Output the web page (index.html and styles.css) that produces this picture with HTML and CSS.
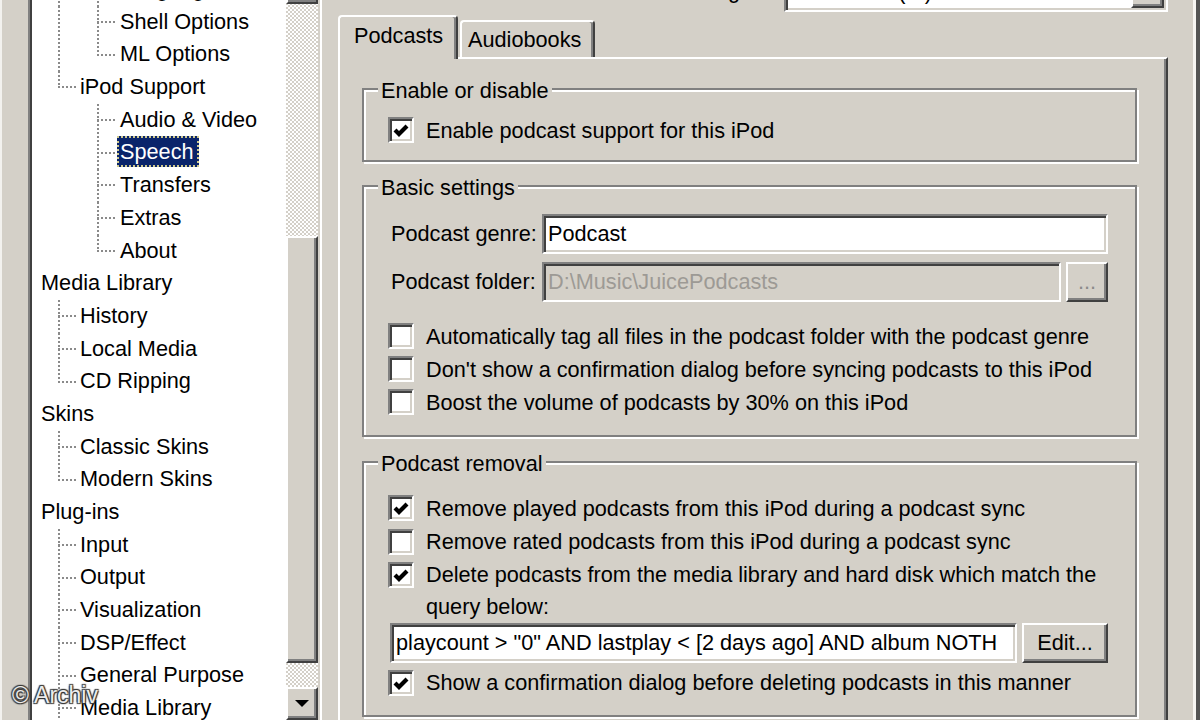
FILE: index.html
```html
<!DOCTYPE html>
<html>
<head>
<meta charset="UTF-8">
<title>Preferences - iPod Support</title>
<link rel="stylesheet" href="styles.css">
</head>
<body>
<div class="prefs">
	<!-- left: preferences tree -->
	<div class="tree-box">
		<div class="tree-inner">
			<ul class="tree">
				<li class="l2 mid through">Language</li>
				<li class="l2 mid through">Shell Options</li>
				<li class="l2 last through">ML Options</li>
				<li class="l1 last">iPod Support</li>
				<li class="l2 mid">Audio &amp; Video</li>
				<li class="l2 mid"><span class="sel">Speech</span></li>
				<li class="l2 mid">Transfers</li>
				<li class="l2 mid">Extras</li>
				<li class="l2 last">About</li>
				<li class="l0">Media Library</li>
				<li class="l1 mid">History</li>
				<li class="l1 mid">Local Media</li>
				<li class="l1 last">CD Ripping</li>
				<li class="l0">Skins</li>
				<li class="l1 mid">Classic Skins</li>
				<li class="l1 last">Modern Skins</li>
				<li class="l0">Plug-ins</li>
				<li class="l1 mid">Input</li>
				<li class="l1 mid">Output</li>
				<li class="l1 mid">Visualization</li>
				<li class="l1 mid">DSP/Effect</li>
				<li class="l1 mid">General Purpose</li>
				<li class="l1 mid">Media Library</li>
			</ul>
			<div class="scrollbar">
				<div class="sb-btn"><span class="arrow-up"></span></div>
				<div class="sb-track-top"></div>
				<div class="sb-thumb"></div>
				<div class="sb-track-bottom"></div>
				<div class="sb-btn"><span class="arrow-down"></span></div>
			</div>
		</div>
	</div>

	<!-- right: settings page -->
	<div class="page">
		<div class="device-bar">
			<span class="device-label">Current iPod setting:</span>
			<div class="combo">
				<span class="combo-text">iPod Nano (F:)</span>
				<span class="combo-btn"><span class="arrow-down"></span></span>
			</div>
		</div>

		<div class="tabs">
			<div class="tab active">Podcasts</div>
			<div class="tab">Audiobooks</div>
		</div>

		<div class="tab-page">
			<div class="group g-enable">
				<div class="legend">Enable or disable</div>
				<label class="check"><span class="box on"><svg viewBox="0 0 22 22"><path d="M5 11 L9 15 L17 7"/></svg></span>Enable podcast support for this iPod</label>
			</div>

			<div class="group g-basic">
				<div class="legend">Basic settings</div>
				<div class="form-row genre">
					<span class="form-label">Podcast genre:</span>
					<div class="field">Podcast</div>
				</div>
				<div class="form-row folder">
					<span class="form-label">Podcast folder:</span>
					<div class="field disabled">D:\Music\JuicePodcasts</div>
					<div class="btn browse">...</div>
				</div>
				<div class="checks">
					<label class="check"><span class="box"></span>Automatically tag all files in the podcast folder with the podcast genre</label>
					<label class="check"><span class="box"></span>Don't show a confirmation dialog before syncing podcasts to this iPod</label>
					<label class="check"><span class="box"></span>Boost the volume of podcasts by 30% on this iPod</label>
				</div>
			</div>

			<div class="group g-removal">
				<div class="legend">Podcast removal</div>
				<div class="checks">
					<label class="check"><span class="box on"><svg viewBox="0 0 22 22"><path d="M5 11 L9 15 L17 7"/></svg></span>Remove played podcasts from this iPod during a podcast sync</label>
					<label class="check"><span class="box"></span>Remove rated podcasts from this iPod during a podcast sync</label>
					<label class="check wrap"><span class="box on"><svg viewBox="0 0 22 22"><path d="M5 11 L9 15 L17 7"/></svg></span><span>Delete podcasts from the media library and hard disk which match the query below:</span></label>
				</div>
				<div class="query-row">
					<div class="field query">playcount &gt; "0" AND lastplay &lt; [2 days ago] AND album NOTH</div>
					<div class="btn edit">Edit...</div>
				</div>
				<label class="check last-check"><span class="box on"><svg viewBox="0 0 22 22"><path d="M5 11 L9 15 L17 7"/></svg></span>Show a confirmation dialog before deleting podcasts in this manner</label>
			</div>
		</div>
	</div>

	<div class="edge"></div>

	<div class="watermark">© Archiv</div>
</div>
</body>
</html>
```

FILE: styles.css
```css
body {
	margin: 0;
	background: #d4d0c8;
	font-family: "Liberation Sans", Arial, sans-serif;
	font-size: 21.7px;
	color: #000;
	--dot: #8a8a8a;
	--vdots: repeating-linear-gradient(to bottom, var(--dot) 0 2px, transparent 2px 4px);
	--hdots: repeating-linear-gradient(to right, var(--dot) 0 2px, transparent 2px 4px);
}

.prefs {
	position: relative;
	display: flex;
	height: 720px;
	overflow: hidden;
	border-left: 2px solid #f3f2ef;
	padding-left: 26px;
}

/* tree view with sunken frame */
.tree-box {
	flex: none;
	display: flex;
	width: 294px;
	height: 780px;
	margin-top: -29px;
	box-sizing: border-box;
	border-left: 2px solid #808080;
	border-right: 2px solid #fff;
}

.tree-inner {
	flex: 1;
	display: flex;
	border-left: 2px solid #404040;
	border-right: 2px solid #d4d0c8;
}

.tree {
	flex: 1;
	margin: 0;
	padding: 2px 0 0;
	list-style: none;
	background: #fff;
	overflow: hidden;
}

.tree li {
	height: 32.7px;
	line-height: 32.7px;
	white-space: nowrap;
	background-repeat: no-repeat;
}

.l0 { padding-left: 9px; }
.l1 { padding-left: 48px; --x: 26px; }
.l2 { padding-left: 88px; --x: 65px; }

/* dotted connector lines */
.mid, .last {
	background-image: var(--hdots), var(--vdots);
	background-position: var(--x) 50%, var(--x) 0;
	background-size: 18px 2px, 2px 100%;
}
.last {
	background-size: 18px 2px, 2px 50%;
}
.through.mid, .through.last {
	background-image: var(--hdots), var(--vdots), var(--vdots);
	background-position: var(--x) 50%, var(--x) 0, 26px 0;
}
.through.mid { background-size: 18px 2px, 2px 100%, 2px 100%; }
.through.last { background-size: 18px 2px, 2px 50%, 2px 100%; }

.sel {
	display: inline-block;
	margin-left: -3px;
	padding: 0 5px 0 3px;
	line-height: 31px;
	background: #0a246a;
	color: #fff;
	outline: 2px dotted #cfc98e;
	outline-offset: -2px;
}

/* vertical scrollbar */
.scrollbar {
	width: 32px;
	display: flex;
	flex-direction: column;
	background: repeating-conic-gradient(#fff 0 25%, #d4d0c8 0 50%) 0 0 / 4px 4px;
}

.sb-btn, .sb-thumb, .combo-btn, .btn {
	box-sizing: border-box;
	background: #d4d0c8;
	border: 2px solid;
	border-color: #fff #404040 #404040 #fff;
	box-shadow: inset -2px -2px #808080;
}

.sb-btn {
	height: 33px;
	display: flex;
	align-items: center;
	justify-content: center;
}
.sb-track-top { height: 232px; }
.sb-thumb { height: 427px; }
.sb-track-bottom { height: 24px; }

.arrow-down, .arrow-up {
	width: 0;
	height: 0;
	border-left: 7px solid transparent;
	border-right: 7px solid transparent;
}
.arrow-down { border-top: 7px solid #000; }
.arrow-up { border-bottom: 7px solid #000; }

/* right side */
.page {
	flex: 1;
	min-width: 0;
	display: flex;
	flex-direction: column;
	margin-left: 16px;
}

.device-bar {
	height: 15px;
	display: flex;
	justify-content: flex-end;
	align-items: flex-end;
	padding-right: 23px;
}

.device-label {
	line-height: 46px;
	margin: 0 38px 1px 0;
}

.combo {
	display: flex;
	width: 384px;
	height: 46px;
	margin-bottom: 3px;
	box-sizing: border-box;
	border: 2px solid;
	border-color: #808080 #fff #fff #808080;
	box-shadow: inset 2px 2px #404040, inset -2px -2px #d4d0c8;
	background: #fff;
	padding: 2px;
}
.combo-text {
	flex: 1;
	padding: 4px 0 0 3px;
	line-height: 36px;
}
.combo-btn {
	width: 33px;
	display: flex;
	align-items: center;
	justify-content: center;
}

.tabs {
	display: flex;
	align-items: flex-end;
	gap: 2px;
	height: 42px;
}

.tab {
	box-sizing: border-box;
	height: 37px;
	width: 135px;
	padding: 5px 0 0 6px;
	line-height: 26px;
	background: #d4d0c8;
	border-top: 2px solid #fff;
	border-left: 2px solid #fff;
	border-right: 2px solid #404040;
	border-radius: 4px 4px 0 0;
	box-shadow: inset -2px 0 #808080;
}

.tab.active {
	position: relative;
	z-index: 1;
	width: 120px;
	height: 44px;
	margin-bottom: -2px;
	padding: 6px 0 0 14px;
}

.tab-page {
	flex: 1;
	min-width: 0;
	margin-right: 23px;
	padding: 29px 29px 0 22px;
	border-top: 2px solid #fff;
	border-left: 2px solid #fff;
	border-right: 2px solid #404040;
	box-shadow: inset -2px 0 #808080;
}

/* etched group boxes */
.group {
	border: 2px solid #808080;
	box-shadow: inset 2px 2px #fff, 2px 2px #fff;
	padding: 0 27px 0 24px;
}

.legend {
	width: max-content;
	margin: -12px 0 0 -10px;
	padding: 0 3px;
	line-height: 26px;
	background: #d4d0c8;
}

.g-enable { padding-bottom: 13.5px; }
.g-enable .check { margin-top: 9.5px; }

.g-basic { margin-top: 23px; padding-bottom: 16.5px; }
.g-removal { margin-top: 24px; padding-bottom: 15.5px; --row: 33.5px; }

.check {
	display: flex;
	align-items: flex-start;
	gap: 12px;
	line-height: var(--row, 33px);
	white-space: nowrap;
}

.box {
	flex: none;
	width: 26px;
	height: 26px;
	margin-top: calc((var(--row, 33px) - 26px) / 2);
	box-sizing: border-box;
	border: 2px solid;
	border-color: #808080 #fff #fff #808080;
	box-shadow: inset 2px 2px #404040, inset -2px -2px #d4d0c8;
	background: #fff;
}

.box svg {
	display: block;
	width: 22px;
	height: 22px;
	fill: none;
	stroke: #000;
	stroke-width: 4.2;
}

.check.wrap {
	white-space: normal;
	line-height: 32px;
}
.check.wrap .box { margin-top: 3px; }

.g-basic .checks { margin-top: 17.5px; }
.g-basic .form-row.genre { margin-top: 13px; }
.g-removal .checks { margin-top: 14.5px; }

.form-row {
	display: flex;
	align-items: center;
	gap: 5px;
}
.form-row.folder { margin-top: 8px; }

.form-label {
	width: 149px;
	flex: none;
	padding-left: 3px;
	box-sizing: border-box;
}

.field {
	flex: 1;
	min-width: 0;
	height: 40px;
	box-sizing: border-box;
	border: 2px solid;
	border-color: #808080 #fff #fff #808080;
	box-shadow: inset 2px 2px #404040, inset -2px -2px #d4d0c8;
	background: #fff;
	padding: 0 4px;
	line-height: 36px;
	white-space: nowrap;
	overflow: hidden;
}

.field.disabled {
	background: #d4d0c8;
	color: #9d9a95;
}

.btn {
	flex: none;
	height: 40px;
	display: flex;
	align-items: center;
	justify-content: center;
}
.btn.browse {
	width: 42px;
	color: #8a8a8a;
}
.btn.edit { width: 86px; }

.query-row {
	display: flex;
	gap: 5px;
	margin-top: 0.5px;
	padding-left: 2px;
}
.query-row .field { height: 39.5px; line-height: 35.5px; }
.query-row .btn { height: 39.5px; }

.last-check { margin-top: 3.5px; --row: 33px; }

.edge {
	flex: none;
	width: 9px;
	background: linear-gradient(to right, #d4d0c8 0 2px, #f7f6f3 2px 5px, #555 5px);
}

.watermark {
	position: absolute;
	left: 10px;
	top: 682px;
	font-size: 23px;
	color: #ececec;
	text-shadow: 1px 1px 1px #333, -1px -1px 1px #333, 1px -1px 1px #333, -1px 1px 1px #333;
}
```
